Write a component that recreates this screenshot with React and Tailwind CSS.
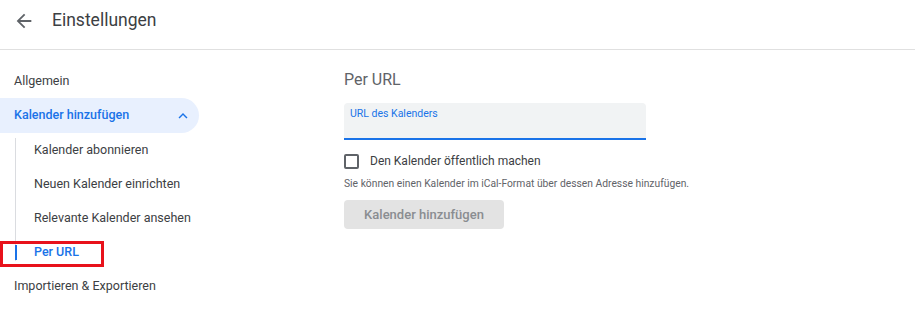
import React from "react";

const NavItem = ({ children }) => (
    <div className="h-[34px] flex items-center pl-[14px] text-[12.5px] text-[#3c4043]">{children}</div>
);

const SubItem = ({ children, active }) => (
    <div className="h-[34px] flex items-center relative">
        {active && <div className="absolute left-[15px] top-[10px] h-[15px] w-[2px] bg-[#1a73e8]" />}
        <span className={`pl-[34px] text-[12.5px] ${active ? "text-[#1a73e8] font-medium" : "text-[#3c4043]"}`}>{children}</span>
        {active && <div className="absolute left-0 top-[6px] w-[104px] h-[26px] border-[3px] border-[#e8121b]" />}
    </div>
);

export default function App() {
    return (
        <div className="w-[915px] h-[321px] bg-white overflow-hidden" style={{ fontFamily: "Roboto, 'Liberation Sans', sans-serif" }}>
            <div className="h-[50px] border-b border-[#e0e0e0] flex items-center">
                <svg width="22" height="22" viewBox="0 0 24 24" className="ml-[13px] mt-[-8px]" fill="#5f6368">
                    <path d="M20 11H7.83l5.59-5.59L12 4l-8 8 8 8 1.41-1.41L7.83 13H20v-2z" />
                </svg>
                <span className="ml-[17px] mt-[-8px] text-[17.5px] text-[#3c4043]">Einstellungen</span>
            </div>

            <div className="flex pt-[14px]">
                <div className="w-[344px] shrink-0">
                    <div className="w-[199px]">
                        <NavItem>Allgemein</NavItem>
                        <div className="h-[35px] flex items-center justify-between bg-[#e8f0fe] rounded-r-full pl-[14px] pr-[7px]">
                            <span className="text-[12.5px] font-medium text-[#1a73e8]">Kalender hinzufügen</span>
                            <svg width="18" height="18" viewBox="0 0 24 24" fill="#1a73e8">
                                <path d="M7.41 15.41L12 10.83l4.59 4.58L18 14l-6-6-6 6z" />
                            </svg>
                        </div>
                        <div className="relative">
                            <div className="absolute left-[15px] top-[5px] bottom-[8px] w-px bg-[#dadce0]" />
                            <SubItem>Kalender abonnieren</SubItem>
                            <SubItem>Neuen Kalender einrichten</SubItem>
                            <SubItem>Relevante Kalender ansehen</SubItem>
                            <SubItem active>Per URL</SubItem>
                        </div>
                        <NavItem>Importieren &amp; Exportieren</NavItem>
                    </div>
                </div>

                <div className="flex-1 mt-[-1px]">
                    <div className="h-[34px] flex items-center text-[16px] text-[#5f6368]">Per URL</div>
                    <div className="w-[302px] h-[37px] mt-[6px] bg-[#f1f3f4] border-b-2 border-[#1a73e8] rounded-t-[4px] px-[6px] pt-[4px] text-[10.5px] leading-[14px] text-[#1a73e8]">
                        URL des Kalenders
                    </div>
                    <div className="flex items-center mt-[13px] h-[16px]">
                        <div className="w-[15px] h-[15px] border-2 border-[#5f6368] rounded-[2px]" />
                        <span className="ml-[11px] text-[12px] text-[#3c4043]">Den Kalender öffentlich machen</span>
                    </div>
                    <div className="mt-[7px] text-[10.3px] text-[#5f6368]">Sie können einen Kalender im iCal-Format über dessen Adresse hinzufügen.</div>
                    <div className="mt-[9px] w-[160px] h-[29px] bg-[#e3e3e3] rounded-[4px] flex items-center justify-center text-[13px] font-medium text-[#8a8d91]">
                        Kalender hinzufügen
                    </div>
                </div>
            </div>
        </div>
    );
}
